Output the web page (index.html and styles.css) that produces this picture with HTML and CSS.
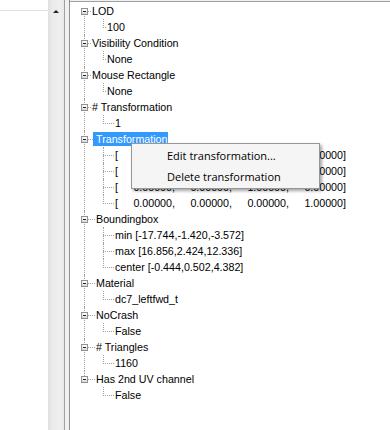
FILE: index.html
```html
<!doctype html>
<html>
<head>
    <link rel="stylesheet" href="styles.css">
</head>
<body>
<div class="app">
    <div class="list">
        <div class="list-head"></div>
    </div>
    <div class="vscroll"><span class="arrow-up"></span></div>
    <div class="split"></div>
    <div class="tree-panel">
        <ul class="tree">
            <li class="node">
                <div class="row"><span class="box"></span><span class="link"></span><span class="label">LOD</span></div>
                <ul class="kids">
                    <li><div class="row"><span class="link"></span><span class="label">100</span></div></li>
                </ul>
            </li>
            <li class="node">
                <div class="row"><span class="box"></span><span class="link"></span><span class="label">Visibility Condition</span></div>
                <ul class="kids">
                    <li><div class="row"><span class="link"></span><span class="label">None</span></div></li>
                </ul>
            </li>
            <li class="node">
                <div class="row"><span class="box"></span><span class="link"></span><span class="label">Mouse Rectangle</span></div>
                <ul class="kids">
                    <li><div class="row"><span class="link"></span><span class="label">None</span></div></li>
                </ul>
            </li>
            <li class="node">
                <div class="row"><span class="box"></span><span class="link"></span><span class="label"># Transformation</span></div>
                <ul class="kids">
                    <li><div class="row"><span class="link long"></span><span class="label">1</span></div></li>
                </ul>
            </li>
            <li class="node">
                <div class="row"><span class="box"></span><span class="link long"></span><span class="label selected">Transformation</span></div>
                <ul class="kids">
                    <li><div class="row"><span class="link long"></span><span class="label">[<span class="num">1.00000,</span><span class="num">0.00000,</span><span class="num">0.00000,</span><span class="num">0.00000]</span></span></div></li>
                    <li><div class="row"><span class="link long"></span><span class="label">[<span class="num">0.00000,</span><span class="num">1.00000,</span><span class="num">0.00000,</span><span class="num">0.00000]</span></span></div></li>
                    <li><div class="row"><span class="link long"></span><span class="label">[<span class="num">0.00000,</span><span class="num">0.00000,</span><span class="num">1.00000,</span><span class="num">0.00000]</span></span></div></li>
                    <li><div class="row"><span class="link long"></span><span class="label">[<span class="num">0.00000,</span><span class="num">0.00000,</span><span class="num">0.00000,</span><span class="num">1.00000]</span></span></div></li>
                </ul>
            </li>
            <li class="node">
                <div class="row"><span class="box"></span><span class="link long"></span><span class="label">Boundingbox</span></div>
                <ul class="kids">
                    <li><div class="row"><span class="link long"></span><span class="label">min [-17.744,-1.420,-3.572]</span></div></li>
                    <li><div class="row"><span class="link long"></span><span class="label">max [16.856,2.424,12.336]</span></div></li>
                    <li><div class="row"><span class="link long"></span><span class="label">center [-0.444,0.502,4.382]</span></div></li>
                </ul>
            </li>
            <li class="node">
                <div class="row"><span class="box"></span><span class="link long"></span><span class="label">Material</span></div>
                <ul class="kids">
                    <li><div class="row"><span class="link long"></span><span class="label">dc7_leftfwd_t</span></div></li>
                </ul>
            </li>
            <li class="node">
                <div class="row"><span class="box"></span><span class="link long"></span><span class="label">NoCrash</span></div>
                <ul class="kids">
                    <li><div class="row"><span class="link long"></span><span class="label">False</span></div></li>
                </ul>
            </li>
            <li class="node">
                <div class="row"><span class="box"></span><span class="link long"></span><span class="label"># Triangles</span></div>
                <ul class="kids">
                    <li><div class="row"><span class="link long"></span><span class="label">1160</span></div></li>
                </ul>
            </li>
            <li class="node">
                <div class="row"><span class="box"></span><span class="link long"></span><span class="label">Has 2nd UV channel</span></div>
                <ul class="kids">
                    <li><div class="row"><span class="link long"></span><span class="label">False</span></div></li>
                </ul>
            </li>
        </ul>
    </div>
    <div class="menu">
        <div class="menu-item">Edit transformation...</div>
        <div class="menu-item">Delete transformation</div>
    </div>
</div>
</body>
</html>
```

FILE: styles.css
```css
body {
    margin: 0;
    background: #f0f0f0;
    font-family: "Liberation Sans", Arial, sans-serif;
    font-size: 10.7px;
    color: #000;
}
.app {
    display: flex;
    height: 430px;
    position: relative;
    overflow: hidden;
}
.list {
    width: 48px;
    flex: none;
    background: #fff;
}
.list-head {
    height: 10px;
    border-bottom: 1px solid #e2e2e2;
}
.vscroll {
    width: 16px;
    flex: none;
    box-sizing: border-box;
    padding-top: 10px;
    display: flex;
    justify-content: center;
    align-items: flex-start;
    background: linear-gradient(to right, #e0e0e0, #eaeaea 25%, #efefef 70%, #e9e9e9);
}
.arrow-up {
    width: 0;
    height: 0;
    border-left: 3px solid transparent;
    border-right: 3px solid transparent;
    border-bottom: 3px solid #1e1e1e;
}
.split {
    width: 6px;
    flex: none;
    box-sizing: border-box;
    border-left: 1px solid #a0a0a0;
    border-right: 1px solid #8e8f8f;
    background: #f0f0f0;
}
.tree-panel {
    flex: 1;
    margin-top: 1px;
    padding-top: 1px;
    border-top: 1px solid #a0a0a0;
    background: #fff;
}
.tree,
.kids {
    list-style: none;
    margin: 0;
    padding: 0;
}
.node {
    position: relative;
    padding-left: 11px;
}
.node::before {
    content: "";
    position: absolute;
    left: 14px;
    top: 0;
    bottom: 0;
    border-left: 1px dotted #a0a0a0;
}
.node:first-child::before {
    top: 8px;
}
.node:last-child::before {
    bottom: auto;
    height: 9px;
}
.kids > li {
    position: relative;
    padding-left: 22px;
}
.kids > li::before {
    content: "";
    position: absolute;
    left: 22px;
    top: 0;
    bottom: 0;
    border-left: 1px dotted #a0a0a0;
}
.kids > li:last-child::before {
    bottom: auto;
    height: 9px;
}
.row {
    display: flex;
    align-items: flex-start;
    height: 16px;
    white-space: nowrap;
}
.box {
    position: relative;
    z-index: 1;
    flex: none;
    width: 7px;
    height: 7px;
    margin-top: 5px;
    box-sizing: border-box;
    border: 1px solid #919191;
    background: linear-gradient(#ffffff, #dadada);
}
.box::after {
    content: "";
    position: absolute;
    left: 1px;
    right: 1px;
    top: 2px;
    height: 1px;
    background: #222;
}
.link {
    flex: none;
    width: 3px;
    height: 0;
    margin-top: 8px;
    border-top: 1px dotted #a0a0a0;
}
.link.long {
    width: 7px;
}
.kids .link.long {
    width: 11px;
}
.label {
    padding: 0 1px;
    line-height: 16px;
}
.label.selected {
    margin-top: 1px;
    margin-left: -2px;
    padding: 0 1px 0 3px;
    height: 14px;
    line-height: 14px;
    background: #3399ff;
    color: #fff;
}
.num {
    display: inline-block;
    width: 57px;
    text-align: right;
}
.menu {
    position: absolute;
    left: 131px;
    top: 143px;
    width: 189px;
    box-sizing: border-box;
    padding: 1px;
    border: 1px solid #979797;
    background: #f5f5f5;
    box-shadow: 2px 2px 3px rgba(0, 0, 0, 0.35);
    font-family: "Open Sans", "DejaVu Sans", sans-serif;
    font-size: 11px;
}
.menu-item {
    height: 21px;
    line-height: 21px;
    padding-left: 34px;
    white-space: nowrap;
}
```
